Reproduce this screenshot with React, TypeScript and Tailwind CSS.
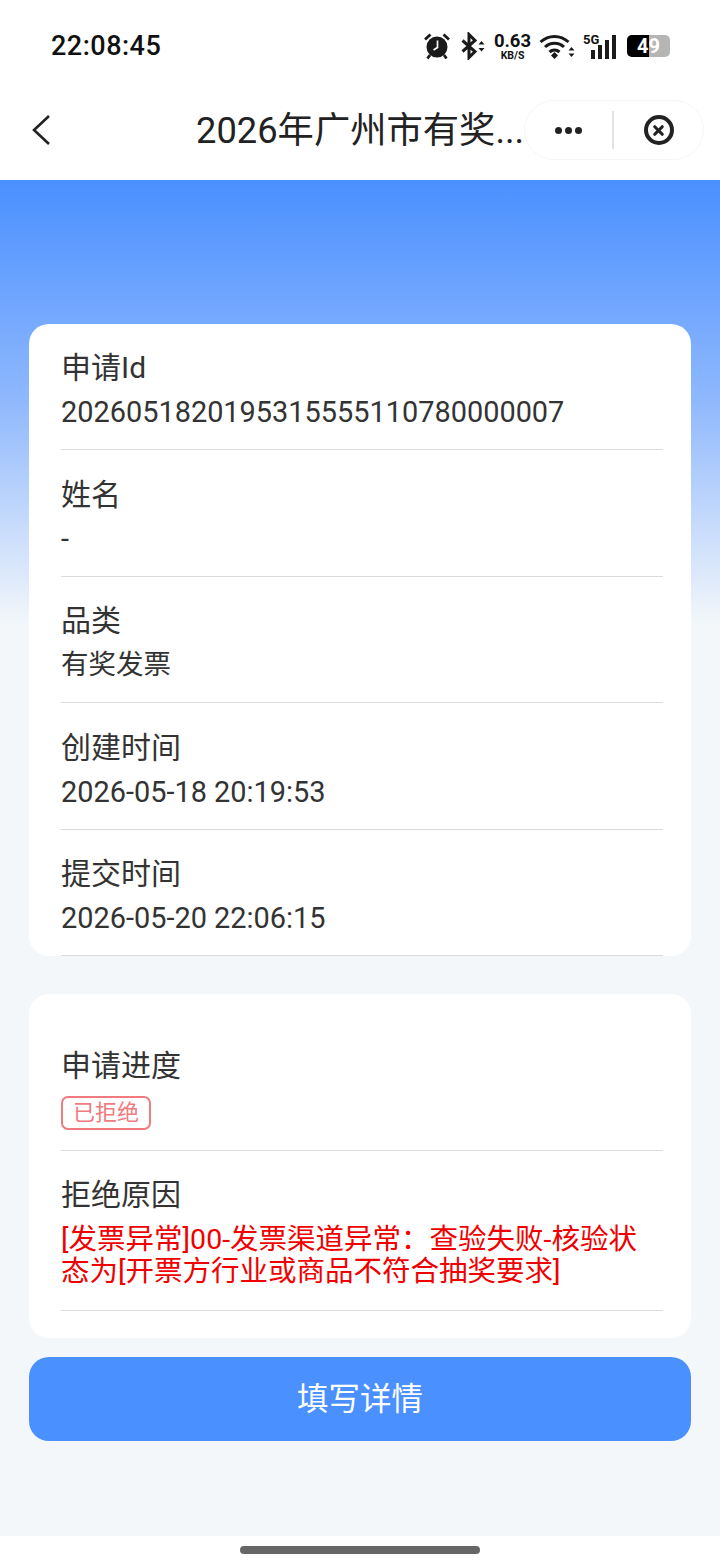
import { X } from "lucide-react";

const font = "font-['Roboto','Noto_Sans_CJK_SC',sans-serif]";

const infoRows = [
  { label: "申请Id", value: "2026051820195315555110780000007", size: "text-[28.900px]" },
  { label: "姓名", value: "-", size: "text-[28.900px]" },
  { label: "品类", value: "有奖发票", size: "text-[27.500px]" },
  { label: "创建时间", value: "2026-05-18 20:19:53", size: "text-[28.900px]" },
  { label: "提交时间", value: "2026-05-20 22:06:15", size: "text-[28.900px]" },
];

function StatusBar() {
  return (
    <div className="flex h-[92px] items-center justify-between bg-white pl-[51px] pr-[50px] text-[#111]">
      <span className="text-[27px] font-medium tracking-[0.5px]">22:08:45</span>
      <div className="flex items-center">
        {/* alarm */}
        <svg width="26" height="28" viewBox="0 0 26 28">
          <circle cx="13" cy="15" r="10.500" fill="#1a1a1a" />
          <path d="M1 7.500 6.500 2.500M25 7.500 19.500 2.500M6 23l-2.500 3.500M20 23l2.500 3.500" stroke="#1a1a1a" strokeWidth="2.800" fill="none" />
          <path d="M13.500 8.500v7l-4 2.500" stroke="#fff" strokeWidth="1.700" fill="none" />
        </svg>
        {/* bluetooth */}
        <svg className="ml-[10px]" width="26" height="28" viewBox="0 0 26 28" fill="none">
          <path d="M2.500 8.500 15 19.500l-6 6V2.500l6 6L2.500 19.500" stroke="#1a1a1a" strokeWidth="3" />
          <path d="M18.500 12.500l3-3.500 3 3.500zM18.500 16l3 3.500 3-3.500z" fill="#1a1a1a" />
        </svg>
        <div className="ml-[7px] flex w-[39px] flex-col items-center font-bold">
          <span className="text-[18.500px] leading-[18px]">0.63</span>
          <span className="text-[10.500px] leading-[11px]">KB/S</span>
        </div>
        {/* wifi */}
        <svg className="ml-[7px]" width="36" height="26" viewBox="0 0 36 26" fill="none">
          <path d="M1.500 9C9.500 1.500 21.500 1.500 29.500 9M6 14c5.500-5 13.500-5 19 0M10.500 19c3-2.600 7-2.600 10 0" stroke="#1a1a1a" strokeWidth="3" />
          <path d="M12 22.500l3.500-3.500 3.500 3.500-3.500 3.500z" fill="#1a1a1a" />
          <path d="M29.500 17.500l3-3.500 3 3.500zM29.500 20.500l3 3.500 3-3.500z" fill="#1a1a1a" />
        </svg>
        {/* 5G signal */}
        <div className="relative ml-[8px] h-[26px] w-[33px]">
          <span className="absolute left-0 top-0 text-[13px] font-bold leading-[13px]">5G</span>
          <div className="absolute bottom-0 right-0 flex items-end gap-[3px]">
            <div className="h-[9px] w-[4px] bg-[#1a1a1a]" />
            <div className="h-[14px] w-[4px] bg-[#1a1a1a]" />
            <div className="h-[19px] w-[4px] bg-[#1a1a1a]" />
            <div className="h-[24px] w-[4px] bg-[#1a1a1a]" />
          </div>
        </div>
        {/* battery */}
        <div className="relative ml-[11px] flex h-[22px] w-[43px] overflow-hidden rounded-[5px] bg-[#b5b5b5]">
          <div className="h-full w-[22px] bg-black" />
          <span className="absolute inset-0 flex items-center justify-center text-[20px] font-bold text-white">49</span>
        </div>
      </div>
    </div>
  );
}

function NavBar() {
  return (
    <div className="relative flex h-[88px] items-start bg-white">
      <svg className="ml-[31px] mt-[21px]" width="22" height="34" viewBox="0 0 22 34" fill="none">
        <path d="M18 3 3 17l15 14" stroke="#222" strokeWidth="2.600" />
      </svg>
      <span className="ml-[143px] mt-[17px] text-[36.300px] leading-[44px] text-[#222]">2026年广州市有奖...</span>
      <div className="absolute right-[16px] top-[8px] flex h-[60px] w-[180px] items-center rounded-full border border-[#f6f6f6] bg-white">
        <div className="flex flex-1 items-center justify-center gap-[3px]">
          <div className="size-[7px] rounded-full bg-[#222]" />
          <div className="size-[7px] rounded-full bg-[#222]" />
          <div className="size-[7px] rounded-full bg-[#222]" />
        </div>
        <div className="h-[38px] w-[2px] bg-[#e2e2e2]" />
        <div className="flex w-[89px] items-center justify-center">
          <div className="flex size-[30px] items-center justify-center rounded-full border-[4px] border-[#222]">
            <X size={15} strokeWidth={5} color="#222" />
          </div>
        </div>
      </div>
    </div>
  );
}

function Row({ label, children }: { label: string; children: React.ReactNode }) {
  return (
    <div className="border-b border-[#d9dcdc]">
      <div className="text-[30px] leading-[44px] text-[#333]">{label}</div>
      {children}
    </div>
  );
}

export default function App() {
  return (
    <div className={`${font} flex h-[1568px] w-[720px] flex-col overflow-hidden bg-white`}>
      <StatusBar />
      <NavBar />
      <div className="flex h-[1356px] flex-col bg-[linear-gradient(180deg,#4a90ff_0px,#8fb8fd_220px,#f3f7fa_445px)] px-[29px] pt-[144px]">
        <div className="h-[632px] rounded-[20px] bg-white pl-[32px] pr-[28px]">
          {infoRows.map((r) => (
            <div key={r.label} className="h-[126.500px] pt-[22px]">
              <Row label={r.label}>
                <div className={`h-[59px] ${r.size} leading-[44px] text-[#333]`}>{r.value}</div>
              </Row>
            </div>
          ))}
        </div>

        <div className="mt-[38px] h-[344px] rounded-[20px] bg-white pl-[32px] pr-[28px] pt-[50px]">
          <Row label="申请进度">
            <div className="h-[62px] pt-[8px]">
              <span className="flex h-[34px] w-[90px] items-center justify-center rounded-[7px] border-2 border-[#ef7b7f] text-[22px] leading-none text-[#ef7b7f]">
                已拒绝
              </span>
            </div>
          </Row>
          <div className="pt-[22px]">
            <Row label="拒绝原因">
              <div className="pb-[22px] pt-[7px] text-[28.500px] leading-[32px] text-[#f00000]">
                [发票异常]00-发票渠道异常：查验失败-核验状态为[开票方行业或商品不符合抽奖要求]
              </div>
            </Row>
          </div>
        </div>

        <button className="mt-[19px] h-[84px] rounded-[20px] bg-[#4a90ff] pt-[2px] text-[31.500px] text-white">填写详情</button>
      </div>
      <div className="flex flex-1 items-end justify-center pb-[14px]">
        <div className="h-[8px] w-[240px] rounded-full bg-[#666]" />
      </div>
    </div>
  );
}
